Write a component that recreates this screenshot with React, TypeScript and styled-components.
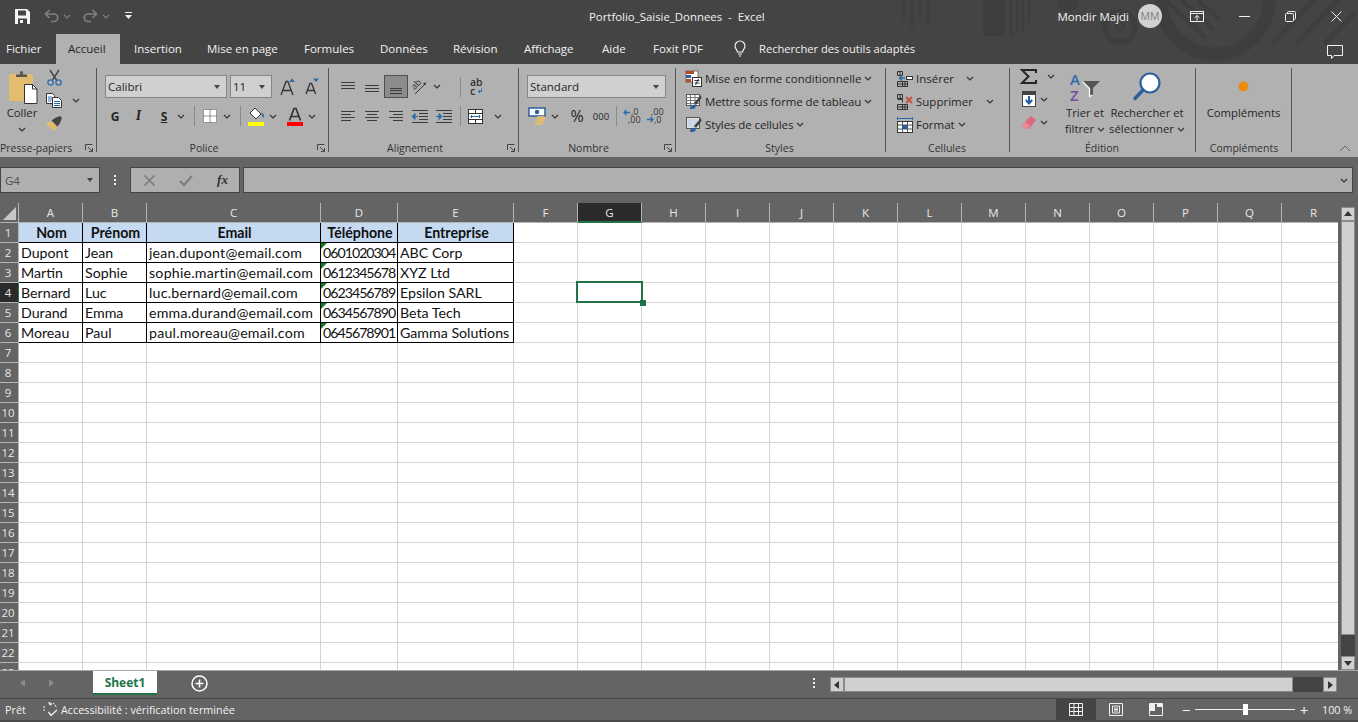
import React from "react";
import styled, { createGlobalStyle } from "styled-components";

const UI = `"Open Sans", "Noto Sans", "Liberation Sans", sans-serif`;
const CELL = `Lato, "Open Sans", "Liberation Sans", sans-serif`;
const GREEN = "#217346";

const Global = createGlobalStyle`
  html, body { margin: 0; padding: 0; width: 100%; height: 100%; overflow: hidden; background: #646464; }
  * { box-sizing: border-box; }
  svg { display: block; flex: none; overflow: visible; }
`;

const Page = styled.div`
  width: 1358px;
  height: 722px;
  display: flex;
  flex-direction: column;
  overflow: hidden;
  background: #646464;
  font-family: ${UI};
  font-size: 11.5px;
`;

/* ---------- header ---------- */
const Header = styled.header`
  position: relative;
  height: 64px;
  flex: none;
  background: #444444;
  color: #f2f2f2;
  overflow: hidden;
`;
const Pattern = styled.svg`
  position: absolute;
  top: 0;
  left: 860px;
  overflow: hidden;
`;
const TitleRow = styled.div`
  position: relative;
  height: 32px;
  display: grid;
  grid-template-columns: 589px auto 1fr;
  align-items: center;
`;
const Qat = styled.div`
  display: flex;
  align-items: center;
  padding-left: 15px;
`;
const TitleText = styled.div`
  font-size: 11.4px;
  white-space: pre;
`;
const WinControls = styled.div`
  display: flex;
  align-items: center;
  justify-content: flex-end;
`;
const UserName = styled.span`
  font-size: 11.5px;
  margin-right: 9px;
`;
const Avatar = styled.div`
  width: 24px;
  height: 24px;
  border-radius: 50%;
  background: #d2d2d2;
  color: #7d7d7d;
  font-size: 10.5px;
  display: flex;
  align-items: center;
  justify-content: center;
  margin-right: 28px;
`;
const Slot = styled.div<{ $w: number; $ml?: number; $h?: number }>`
  width: ${(p) => p.$w}px;
  margin-left: ${(p) => p.$ml ?? 0}px;
  height: ${(p) => (p.$h ? `${p.$h}px` : "auto")};
  flex: none;
  display: flex;
  align-items: center;
  justify-content: center;
`;
const TabRow = styled.nav`
  position: relative;
  height: 32px;
  display: flex;
  align-items: flex-end;
`;
const Tab = styled.div<{ $w: number; $active?: boolean; $pl?: number }>`
  width: ${(p) => p.$w}px;
  height: 30px;
  padding-left: ${(p) => p.$pl ?? 12}px;
  padding-bottom: 1px;
  display: flex;
  align-items: center;
  white-space: nowrap;
  font-size: 11.5px;
  background: ${(p) => (p.$active ? "#b1b1b1" : "transparent")};
  color: ${(p) => (p.$active ? "#262626" : "#f2f2f2")};
`;
const SearchHint = styled.div`
  display: flex;
  align-items: center;
  gap: 12px;
  height: 30px;
  padding-left: 1px;
  padding-bottom: 1px;
  font-size: 11.15px;
  flex: 1;
`;
const CommentBtn = styled.div`
  margin: 0 14px 4px 0;
`;

/* ---------- ribbon ---------- */
const Ribbon = styled.section`
  position: relative;
  height: 93px;
  flex: none;
  background: #b1b1b1;
  color: #262626;
  display: flex;
`;
const Group = styled.div<{ $w: number }>`
  width: ${(p) => p.$w}px;
  flex: none;
  position: relative;
  display: flex;
  flex-direction: column;
  &::after {
    content: "";
    position: absolute;
    right: 0;
    top: 4px;
    bottom: 5px;
    width: 1px;
    background: #555;
  }
`;
const GroupBody = styled.div<{ $pl?: number; $pt?: number }>`
  flex: 1;
  min-height: 0;
  display: flex;
  padding-left: ${(p) => p.$pl ?? 0}px;
  padding-top: ${(p) => p.$pt ?? 0}px;
`;
const Stack = styled.div<{ $gap?: number; $w?: number }>`
  display: flex;
  flex-direction: column;
  flex: none;
  gap: ${(p) => p.$gap ?? 0}px;
  ${(p) => (p.$w ? `width: ${p.$w}px;` : "")}
`;
const ToolRow = styled.div<{ $h?: number }>`
  display: flex;
  align-items: center;
  flex: none;
  height: ${(p) => p.$h ?? 20}px;
`;
const GroupFoot = styled.div`
  height: 16px;
  flex: none;
  margin-bottom: 1px;
  display: flex;
  align-items: center;
  font-size: 10.5px;
  color: #333;
`;
const GroupLabel = styled.div<{ $left?: boolean; $pr?: number }>`
  flex: 1;
  text-align: ${(p) => (p.$left ? "left" : "center")};
  padding-right: ${(p) => p.$pr ?? 0}px;
  white-space: nowrap;
`;
const Launcher = styled.div`
  width: 18px;
  display: flex;
  justify-content: flex-start;
  padding-left: 6px;
`;
const Combo = styled.div<{ $w: number; $ml?: number }>`
  width: ${(p) => p.$w}px;
  margin-left: ${(p) => p.$ml ?? 0}px;
  height: 23px;
  background: #d0d0d0;
  border: 1px solid #868686;
  font-size: 11.5px;
  display: flex;
  align-items: center;
  justify-content: space-between;
  padding: 0 6px 0 2px;
  flex: none;
`;
const Caret = styled.div<{ $c?: string }>`
  width: 0;
  height: 0;
  border-left: 3.5px solid transparent;
  border-right: 3.5px solid transparent;
  border-top: 4px solid ${(p) => p.$c ?? "#444"};
`;
const SelectedTool = styled(Slot)`
  height: 23px;
  background: #8c8c8c;
  border: 1px solid #4f4f4f;
`;
const VSep = styled.div`
  width: 1px;
  height: 20px;
  background: #8a8a8a;
`;
const LinkRow = styled.div<{ $track?: number }>`
  height: 23px;
  flex: none;
  display: flex;
  align-items: center;
  gap: 3px;
  font-size: 11.5px;
  white-space: nowrap;
  letter-spacing: ${(p) => p.$track ?? 0}px;
`;
const Caption = styled.div`
  font-size: 11.3px;
  line-height: 16px;
  height: 16px;
  flex: none;
  text-align: center;
  white-space: nowrap;
  display: flex;
  align-items: center;
  justify-content: center;
  gap: 3px;
`;
const BigTool = styled.div<{ $w: number; $ml?: number }>`
  width: ${(p) => p.$w}px;
  margin-left: ${(p) => p.$ml ?? 0}px;
  flex: none;
  display: flex;
  flex-direction: column;
  align-items: center;
`;
const BigIcon = styled.div`
  height: 37px;
  flex: none;
  display: flex;
  align-items: center;
  justify-content: center;
`;
const BoldGlyph = styled.span<{ $serif?: boolean; $under?: boolean; $size?: number }>`
  font-family: ${(p) => (p.$serif ? `"Liberation Serif", serif` : UI)};
  font-weight: 700;
  font-style: ${(p) => (p.$serif ? "italic" : "normal")};
  text-decoration: ${(p) => (p.$under ? "underline" : "none")};
  font-size: ${(p) => p.$size ?? 12}px;
  color: #262626;
`;
const PlainGlyph = styled.span<{ $size?: number }>`
  font-size: ${(p) => p.$size ?? 11}px;
  color: #262626;
`;
const RibbonCollapse = styled.div`
  position: absolute;
  right: 7px;
  bottom: 5px;
`;

/* ---------- formula bar ---------- */
const FormulaBar = styled.div`
  height: 46px;
  flex: none;
  padding: 10px 5px 10px 0;
  display: flex;
  align-items: stretch;
  background: #646464;
`;
const FieldBox = styled.div<{ $w?: number; $ml?: number }>`
  ${(p) => (p.$w ? `width: ${p.$w}px; flex: none;` : "flex: 1;")}
  margin-left: ${(p) => p.$ml ?? 0}px;
  background: #afafaf;
  border: 1px solid #454545;
  display: flex;
  align-items: center;
  justify-content: space-between;
`;
const NameText = styled.span`
  padding-left: 4px;
  color: #505050;
  font-size: 11.5px;
`;
const Dots = styled.div`
  width: 30px;
  flex: none;
  display: flex;
  flex-direction: column;
  align-items: center;
  justify-content: center;
  gap: 2px;
  span {
    width: 2px;
    height: 2px;
    background: #efefef;
  }
`;
const FnSlot = styled(Slot)`
  height: 100%;
`;

/* ---------- sheet ---------- */
const SheetArea = styled.div`
  height: 467px;
  flex: none;
  display: flex;
`;
const Viewport = styled.div`
  width: 1338px;
  height: 467px;
  overflow: hidden;
  background: #fff;
`;
const SheetGrid = styled.div`
  display: grid;
  grid-template-columns: 19px 64px 64px 174px 77px 116px repeat(13, 64px);
  grid-auto-rows: 20px;
  grid-template-rows: 20px;
`;
const Corner = styled.div`
  background: #646464;
  border-right: 1px solid #b4b4b4;
  border-bottom: 1px solid #b4b4b4;
  display: flex;
  align-items: flex-end;
  justify-content: flex-end;
  padding: 0 2px 2px 0;
`;
const ColHead = styled.div<{ $sel?: boolean }>`
  background: ${(p) => (p.$sel ? "#2a2a2a" : "#646464")};
  color: #e8e8e8;
  font-size: 11.5px;
  text-align: center;
  line-height: 19px;
  border-right: 1px solid #b4b4b4;
  border-bottom: ${(p) => (p.$sel ? `2px solid ${GREEN}` : "1px solid #b4b4b4")};
`;
const RowHead = styled.div<{ $sel?: boolean }>`
  background: ${(p) => (p.$sel ? "#2a2a2a" : "#646464")};
  color: #e8e8e8;
  font-size: 11.5px;
  text-align: center;
  line-height: 19px;
  padding-right: 2px;
  border-bottom: 1px solid #b4b4b4;
  border-right: ${(p) => (p.$sel ? `1px solid ${GREEN}` : "1px solid #b4b4b4")};
`;
const Cell = styled.div<{ $table?: boolean; $head?: boolean; $track?: number }>`
  position: relative;
  padding-left: 2px;
  font-family: ${CELL};
  font-size: 14.2px;
  line-height: 20px;
  color: #111;
  white-space: nowrap;
  background: ${(p) => (p.$head ? "#c5d9f1" : "#fff")};
  font-weight: ${(p) => (p.$head ? 700 : 400)};
  text-align: ${(p) => (p.$head ? "center" : "left")};
  letter-spacing: ${(p) => p.$track ?? 0}px;
  border-right: 1px solid ${(p) => (p.$table ? "#000" : "#d4d4d4")};
  border-bottom: 1px solid ${(p) => (p.$table ? "#000" : "#d4d4d4")};
`;
const ErrorFlag = styled.span`
  position: absolute;
  top: 0;
  left: 0;
  width: 0;
  height: 0;
  border-top: 6px solid #137a2c;
  border-right: 6px solid transparent;
`;
const Selection = styled.span`
  position: absolute;
  z-index: 2;
  top: -2px;
  left: -2px;
  width: 67px;
  height: 22px;
  border: 2px solid ${GREEN};
  &::after {
    content: "";
    position: absolute;
    right: -5px;
    bottom: -5px;
    width: 6px;
    height: 6px;
    background: ${GREEN};
  }
`;
const VScroll = styled.div`
  width: 20px;
  padding: 4px 3px 0 3px;
  display: flex;
  flex-direction: column;
  align-items: stretch;
`;
const ScrollBtn = styled.div`
  height: 14px;
  flex: none;
  background: #d0d0d0;
  border: 1px solid #8a8a8a;
  display: flex;
  align-items: center;
  justify-content: center;
`;
const VThumb = styled.div`
  flex: 1;
  background: #d0d0d0;
  border: 1px solid #8a8a8a;
`;
const VTrack = styled.div`
  height: 21px;
  flex: none;
  background: #444;
`;

/* ---------- sheet tabs ---------- */
const TabsBar = styled.div`
  height: 28px;
  flex: none;
  display: flex;
  align-items: flex-start;
  border-top: 1px solid #a8a8a8;
  background: #646464;
`;
const SheetTab = styled.div`
  width: 64px;
  height: 24px;
  flex: none;
  background: #fff;
  color: ${GREEN};
  font-weight: 700;
  font-size: 12px;
  display: flex;
  align-items: center;
  justify-content: center;
  border-bottom: 2px solid ${GREEN};
  margin-left: 38px;
`;
const HScroll = styled.div`
  margin: 6px 0 0 14px;
  width: 507px;
  height: 15px;
  flex: none;
  display: flex;
`;
const HBtn = styled.div`
  width: 14px;
  flex: none;
  background: #d0d0d0;
  border: 1px solid #8a8a8a;
  display: flex;
  align-items: center;
  justify-content: center;
`;
const HThumb = styled.div`
  flex: 1;
  background: #d0d0d0;
  border: 1px solid #8a8a8a;
`;
const HTrack = styled.div`
  width: 30px;
  flex: none;
  background: #444;
`;

/* ---------- status ---------- */
const StatusBar = styled.footer`
  flex: 1;
  display: flex;
  align-items: stretch;
  background: #646464;
  border-top: 1px solid #484848;
  border-bottom: 2px solid #4a4a4a;
  color: #f2f2f2;
  font-size: 10.8px;
`;
const StatusText = styled.div<{ $w?: number; $pl?: number }>`
  display: flex;
  align-items: center;
  white-space: nowrap;
  flex: none;
  ${(p) => (p.$w ? `width: ${p.$w}px;` : "")}
  padding-left: ${(p) => p.$pl ?? 0}px;
`;
const A11yWrap = styled.div`
  display: flex;
  align-items: center;
`;
const StatusSpring = styled.div`
  flex: 1;
`;
const ViewBtn = styled.div<{ $on?: boolean }>`
  width: 40px;
  flex: none;
  display: flex;
  align-items: center;
  justify-content: center;
  background: ${(p) => (p.$on ? "#444" : "transparent")};
`;
const ZoomTrack = styled.div`
  position: relative;
  width: 100px;
  height: 1px;
  flex: none;
  background: #f0f0f0;
  align-self: center;
  margin: 0 4px;
`;
const ZoomThumb = styled.span`
  position: absolute;
  left: 48px;
  top: -5px;
  width: 5px;
  height: 11px;
  background: #fff;
`;
const ZoomSign = styled.div<{ $ml?: number }>`
  width: 10px;
  flex: none;
  margin-left: ${(p) => p.$ml ?? 0}px;
  display: flex;
  align-items: center;
  justify-content: center;
  font-size: 15px;
  color: #f0f0f0;
`;

/* ---------- icons ---------- */
const Chevron = ({ c = "#333" }: { c?: string }) => (
  <svg width="8" height="5" viewBox="0 0 8 5"><path d="M1 1l3 3 3-3" fill="none" stroke={c} strokeWidth="1.2" /></svg>
);
const SaveIcon = () => (
  <svg width="15" height="15" viewBox="0 0 15 15">
    <path d="M0 0h12l3 3v12H0z" fill="#f4f4f4" />
    <rect x="3" y="1.5" width="8" height="5" fill="#444" />
    <rect x="3" y="9.5" width="9" height="5.5" fill="#444" />
    <rect x="5" y="11" width="3" height="3" fill="#f4f4f4" />
  </svg>
);
const UndoIcon = ({ flip }: { flip?: boolean }) => (
  <svg width="15" height="14" viewBox="0 0 15 14" style={flip ? { transform: "scaleX(-1)" } : undefined}>
    <path d="M5.5 1L1.5 5l4 4M1.5 5H10a3.6 3.6 0 010 7.5H7" fill="none" stroke="#808080" strokeWidth="1.7" />
  </svg>
);
const QatMore = () => (
  <svg width="7" height="8" viewBox="0 0 7 8">
    <path d="M0 .5h7" stroke="#eee" /><path d="M0 3h7L3.5 7z" fill="#eee" />
  </svg>
);
const RibbonOptsIcon = () => (
  <svg width="14" height="11" viewBox="0 0 14 11" fill="none" stroke="#f0f0f0">
    <rect x=".5" y=".5" width="13" height="10" /><path d="M.5 2.5h13M7 9.5V4.5M4.5 6.8L7 4.5l2.5 2.3" />
  </svg>
);
const MinIcon = () => <svg width="11" height="1" viewBox="0 0 11 1"><path d="M0 .5h11" stroke="#f0f0f0" /></svg>;
const RestoreIcon = () => (
  <svg width="11" height="11" viewBox="0 0 11 11" fill="none" stroke="#f0f0f0">
    <rect x=".5" y="2.5" width="8" height="8" rx="1" /><path d="M2.5 2.5v-1a1 1 0 011-1h6a1 1 0 011 1v6a1 1 0 01-1 1h-1" />
  </svg>
);
const CloseIcon = () => (
  <svg width="11" height="11" viewBox="0 0 11 11"><path d="M.5.5l10 10M10.5.5l-10 10" stroke="#f0f0f0" fill="none" /></svg>
);
const CommentIcon = () => (
  <svg width="17" height="15" viewBox="0 0 17 15" fill="none" stroke="#f2f2f2">
    <path d="M.5.5h15v10H7l-2.5 3v-3h-4z" />
  </svg>
);
const BulbIcon = () => (
  <svg width="14" height="17" viewBox="0 0 14 17" fill="none" stroke="#f2f2f2" strokeWidth="1.2">
    <path d="M4.5 12c0-2-2.5-3-2.5-6a5 5 0 0110 0c0 3-2.5 4-2.5 6z" /><path d="M5 14h4M6 16h2" />
  </svg>
);
const PasteIcon = () => (
  <svg width="29" height="33" viewBox="0 0 29 33">
    <rect x="0" y="3" width="24" height="27" rx="2" fill="#e3bc6e" />
    <path d="M7 6V3.5h4V1.5a1.5 1.5 0 013 0v2h4V6z" fill="#555" />
    <path d="M15.5 13.5h8l4.5 4.5v14.5H15.5z" fill="#fff" stroke="#333" />
    <path d="M23.5 13.5v4.5h4.5" fill="none" stroke="#333" />
  </svg>
);
const CutIcon = () => (
  <svg width="15" height="16" viewBox="0 0 15 16" fill="none">
    <path d="M3 0l6.5 10M12 0L5.5 10" stroke="#444" strokeWidth="1.4" />
    <circle cx="3.5" cy="12.5" r="2.6" stroke="#2b6ca8" strokeWidth="1.3" />
    <circle cx="11.5" cy="12.5" r="2.6" stroke="#2b6ca8" strokeWidth="1.3" />
  </svg>
);
const CopyIcon = () => (
  <svg width="16" height="15" viewBox="0 0 16 15">
    <path d="M.5.5h6l2 2v8H.5z" fill="#fff" stroke="#333" />
    <path d="M6.5 4.5h6l3 3v7h-9z" fill="#fff" stroke="#333" />
    <path d="M2 4h4M2 6h4M2 8h3M8 8.5h6M8 10.5h6M8 12.5h6" stroke="#2b6ca8" />
  </svg>
);
const BrushIcon = () => (
  <svg width="16" height="15" viewBox="0 0 16 15">
    <path d="M0 8l5-3 6 6-3 4z" fill="#e3bc6e" />
    <path d="M5.5 4.5L9 2l5-2 2 2-2 5-2.5 3.5z" fill="#444" />
  </svg>
);
const LaunchIcon = () => (
  <svg width="8" height="8" viewBox="0 0 8 8" fill="none" stroke="#444">
    <path d="M.5 6V.5H7.5M3 3l4 4M7.5 4v3.5H4" />
  </svg>
);
const GrowA = ({ down }: { down?: boolean }) => (
  <svg width="16" height="18" viewBox="0 0 16 18">
    <path d={down ? "M2 16L6 5.5h1.6L11.6 16M3.4 12.5h6.8" : "M1 17L6 3.5h1.8L13 17M2.6 12.5h8.6"} fill="none" stroke="#333" strokeWidth="1.3" />
    <path d={down ? "M9 0.5h6L12 4z" : "M9 4h6L12 .5z"} fill="#2b6ca8" />
  </svg>
);
const BordersIcon = () => (
  <svg width="14" height="14" viewBox="0 0 14 14">
    <rect width="14" height="14" fill="#fff" />
    <path d="M.5.5h13v13H.5zM7 .5v13M.5 7h13" fill="none" stroke="#333" strokeDasharray="1 1" />
  </svg>
);
const FillIcon = () => (
  <svg width="17" height="19" viewBox="0 0 17 19">
    <path d="M7 1l6 6-5 5-6-6z" fill="#fff" stroke="#333" />
    <path d="M13 6c2 0 3 1 3 3l-.8 2-1.2-2z" fill="#2b6ca8" />
    <rect x="0" y="15" width="16" height="4" fill="#ffff00" />
  </svg>
);
const FontColorIcon = () => (
  <svg width="16" height="19" viewBox="0 0 16 19">
    <path d="M2.5 13.5L7 1.5h2l4.5 12M4.5 9.5h7" fill="none" stroke="#333" strokeWidth="1.7" />
    <rect x="0" y="15" width="16" height="4" fill="#ff0000" />
  </svg>
);
const LinesIcon = ({ a = [] as number[][] }) => (
  <svg width="16" height="14" viewBox="0 0 16 14">
    {a.map((l, i) => (
      <path key={i} d={`M${l[0]} ${l[2]}.5H${l[1]}`} stroke="#3b3b3b" />
    ))}
  </svg>
);
const OrientIcon = () => (
  <svg width="16" height="16" viewBox="0 0 16 16" fill="none">
    <path d="M3 15L14 4" stroke="#333" /><path d="M14 3.5l-3 .8 2.2 2.2z" fill="#333" />
    <text x="0" y="9" fontFamily="Open Sans, sans-serif" fontSize="9" fill="#333" transform="rotate(-45 4 7)">ab</text>
  </svg>
);
const WrapIcon = () => (
  <svg width="13" height="17" viewBox="0 0 13 17">
    <text x="0" y="8" fontFamily="Open Sans, sans-serif" fontSize="10.5" fontWeight="600" fill="#333">ab</text>
    <text x="0" y="16.5" fontFamily="Open Sans, sans-serif" fontSize="10.5" fontWeight="600" fill="#333">c</text>
    <path d="M11.5 10.5v3h-3M10 12l-1.5 1.5L10 15" fill="none" stroke="#2b6ca8" />
  </svg>
);
const IndentIcon = ({ inc }: { inc?: boolean }) => (
  <svg width="16" height="13" viewBox="0 0 16 13">
    <path d="M0 .5h16M7 3.5h9M7 6.5h9M7 9.5h9M0 12.5h16" stroke="#3b3b3b" />
    <path d={inc ? "M0 6.5h3.5M3 3.5l3 3-3 3z" : "M6 6.5H2.5M3 3.5l-3 3 3 3z"} fill="#2b6ca8" stroke="#2b6ca8" />
  </svg>
);
const MergeIcon = () => (
  <svg width="15" height="15" viewBox="0 0 15 15">
    <rect x=".5" y=".5" width="14" height="14" fill="#fff" stroke="#333" />
    <path d="M.5 4.5h14M.5 10.5h14M7.5.5v4M7.5 10.5v4" stroke="#333" fill="none" />
    <path d="M2.5 7.5h10M3.5 6v3M11.5 6v3" stroke="#2b6ca8" fill="none" />
  </svg>
);
const MoneyIcon = () => (
  <svg width="18" height="17" viewBox="0 0 18 17">
    <rect x="0" y="0" width="16" height="8" fill="#fff" stroke="#2b5f9e" strokeWidth="1.5" />
    <circle cx="8" cy="4" r="2.2" fill="#2b5f9e" />
    <ellipse cx="12" cy="9.5" rx="4.5" ry="1.5" fill="#e3bc6e" />
    <ellipse cx="12" cy="12.3" rx="4.5" ry="1.5" fill="#e3bc6e" />
    <ellipse cx="10" cy="15.2" rx="4.5" ry="1.5" fill="#e3bc6e" />
  </svg>
);
const DecimalIcon = ({ inc }: { inc?: boolean }) => (
  <svg width="16" height="14" viewBox="0 0 16 14">
    <text x={inc ? 4 : 7} y="6" fontFamily="Open Sans, sans-serif" fontSize="9" fill="#333">{inc ? ",00" : ",0"}</text>
    <text x={inc ? 7 : 4} y="14" fontFamily="Open Sans, sans-serif" fontSize="9" fill="#333">{inc ? ",0" : ",00"}</text>
    <path d={inc ? "M0 10.5h6M3.5 8L6 10.5 3.5 13" : "M6 3.5H0M2.5 1L0 3.5 2.5 6"} fill="none" stroke="#2b6ca8" strokeWidth="1.3" />
  </svg>
);
const CondIcon = () => (
  <svg width="16" height="16" viewBox="0 0 16 16">
    <rect x="0" y="0" width="12" height="11" fill="#fff" stroke="#555" strokeWidth=".8" />
    <rect x="0" y="0" width="8" height="3" fill="#b84a2c" />
    <rect x="0" y="4" width="5" height="3" fill="#2b5f9e" />
    <rect x="0" y="8" width="5" height="3" fill="#b84a2c" />
    <rect x="6.5" y="6.5" width="9" height="9" fill="#fff" stroke="#333" />
    <path d="M8.5 9.5h5M8.5 12h5M12.5 8l-3 6" stroke="#333" fill="none" />
  </svg>
);
const TableIcon = ({ plain }: { plain?: boolean }) => (
  <svg width="16" height="16" viewBox="0 0 16 16">
    <rect x=".5" y=".5" width="13" height="11" fill={plain ? "#e6e6e6" : "#fff"} stroke="#555" />
    {plain ? <rect x="2" y="2" width="10" height="8" fill="#c9d6e6" /> : <path d="M.5 3.5h13M.5 6.5h13M.5 9.5h13M4.5.5v11M9 .5v11" stroke="#777" />}
    <path d="M15 1L8 9l2 2 5.5-7z" fill="#444" />
    <path d="M4 15c0-3 2-5 5-4 1 .6 1 2 0 3-1 1-3 1-5 1z" fill="#2b5f9e" />
  </svg>
);
const InsertIcon = () => (
  <svg width="16" height="16" viewBox="0 0 16 16" fill="none" stroke="#333">
    <path d="M.5.5h5v4h-5zM.5 10.5h5v5h-5zM5.5 10.5h5v5h-5zM3 .5v4M8 10.5v5M.5 13h10" />
    <rect x="9.5" y="5.5" width="6" height="3" fill="#fff" />
    <path d="M8 7H2.5M5 4.5L2.5 7 5 9.5" stroke="#2b6ca8" strokeWidth="1.4" />
  </svg>
);
const DeleteIcon = () => (
  <svg width="16" height="16" viewBox="0 0 16 16" fill="none" stroke="#333">
    <path d="M.5.5h5v4h-5zM.5 10.5h5v5h-5zM5.5 10.5h5v5h-5zM3 .5v4M8 10.5v5M.5 13h10M.5 5.5h5v3" />
    <path d="M9 3l6 6M15 3l-6 6" stroke="#c8513a" strokeWidth="1.8" />
  </svg>
);
const FormatIcon = () => (
  <svg width="16" height="16" viewBox="0 0 16 16" fill="none">
    <path d="M.5 1.5h15M.5 0v3M15.5 0v3" stroke="#2b6ca8" />
    <rect x=".5" y="4.5" width="15" height="11" fill="#fff" stroke="#333" />
    <path d="M.5 8h15M.5 12h15M5.5 4.5v11M10.5 4.5v11" stroke="#555" />
    <rect x="5.5" y="8" width="5" height="4" fill="#2b5f9e" />
  </svg>
);
const SigmaIcon = () => (
  <svg width="15" height="15" viewBox="0 0 15 15">
    <path d="M15 4V1H1l6.5 6.5L1 14h14v-3" fill="none" stroke="#262626" strokeWidth="2" />
  </svg>
);
const FillDownIcon = () => (
  <svg width="14" height="16" viewBox="0 0 14 16">
    <rect x="0" y="0" width="14" height="16" fill="#444" />
    <rect x="1" y="4" width="12" height="11" fill="#fff" />
    <path d="M7 5v7M3.8 9L7 12.5 10.2 9" fill="none" stroke="#1f5e9e" strokeWidth="2" />
  </svg>
);
const EraserIcon = () => (
  <svg width="14" height="13" viewBox="0 0 14 13">
    <path d="M9 0l5 4-7 9H3L0 9z" fill="#dc6a7c" />
    <path d="M0 9l3-3 5 4-2 3H3z" fill="#e98a98" />
  </svg>
);
const SortIcon = () => (
  <svg width="30" height="30" viewBox="0 0 30 30">
    <text x="0" y="13" fontFamily="Open Sans, sans-serif" fontSize="15" fontWeight="600" fill="#2b6ca8">A</text>
    <text x="0" y="29" fontFamily="Open Sans, sans-serif" fontSize="15" fontWeight="600" fill="#7b4ba8">Z</text>
    <path d="M12 9h18l-7 7v7l-4 2v-9z" fill="#555" />
    <path d="M12.5 9.5l7 7v8l3-1.5" fill="none" stroke="#fff" strokeWidth="1.3" />
  </svg>
);
const FindIcon = () => (
  <svg width="28" height="29" viewBox="0 0 28 29">
    <circle cx="17" cy="11" r="9.5" fill="#fff" stroke="#2b5f9e" strokeWidth="2.2" />
    <path d="M10 18L2 26.5" stroke="#2b5f9e" strokeWidth="3.4" strokeLinecap="round" />
  </svg>
);
const AddinDot = () => (
  <svg width="11" height="11" viewBox="0 0 11 11"><circle cx="5.5" cy="5.5" r="5" fill="#ec8c0c" /></svg>
);
const CornerTri = () => (
  <svg width="13" height="13" viewBox="0 0 13 13"><path d="M13 0v13H0z" fill="#c8c8c8" /></svg>
);
const XIcon = () => <svg width="11" height="11" viewBox="0 0 11 11"><path d="M.5.5l10 10M10.5.5l-10 10" stroke="#7b7b7b" strokeWidth="1.6" /></svg>;
const CheckIcon = () => <svg width="14" height="11" viewBox="0 0 14 11"><path d="M1 6l4 4 8-9" stroke="#7b7b7b" strokeWidth="2" fill="none" /></svg>;
const FxGlyph = styled.span`
  font-family: "Liberation Serif", serif;
  font-style: italic;
  font-weight: 700;
  font-size: 13px;
  color: #333;
`;
const Tri = ({ dir, c = "#333" }: { dir: "u" | "d" | "l" | "r"; c?: string }) => {
  const d = { u: "M0 6L4 1l4 5z", d: "M0 2l4 5 4-5z", l: "M6 0v8L1 4z", r: "M2 0v8l5-4z" }[dir];
  return <svg width="8" height="8" viewBox="0 0 8 8"><path d={d} fill={c} /></svg>;
};
const PlusCircle = () => (
  <svg width="17" height="17" viewBox="0 0 17 17" fill="none" stroke="#fff">
    <circle cx="8.5" cy="8.5" r="7.5" strokeWidth="1.5" /><path d="M8.5 4.5v8M4.5 8.5h8" strokeWidth="1.6" />
  </svg>
);
const A11yIcon = () => (
  <svg width="16" height="15" viewBox="0 0 16 15" fill="none" stroke="#f0f0f0">
    <path d="M1 9V6a5 5 0 011-3M5 1l1.5-.5M10 1l2 1.5 1.5 3.5" strokeDasharray="2 1" />
    <circle cx="7.5" cy="2" r="1" fill="#f0f0f0" />
    <path d="M5.5 10l2.5 3.5 6-5.5" strokeWidth="1.3" />
  </svg>
);
const GridView = () => (
  <svg width="14" height="13" viewBox="0 0 14 13" fill="none" stroke="#f0f0f0">
    <path d="M.5.5h13v12H.5zM.5 4.5h13M.5 8.5h13M5 .5v12M9.5.5v12" />
  </svg>
);
const PageView = () => (
  <svg width="14" height="13" viewBox="0 0 14 13" fill="none" stroke="#f0f0f0">
    <path d="M.5.5h13v12H.5zM3.5 3h7v7h-7zM5 5h4M5 6.5h4M5 8h4" />
  </svg>
);
const BreakView = () => (
  <svg width="14" height="13" viewBox="0 0 14 13">
    <path d="M.5.5h13v12H.5z" fill="none" stroke="#f0f0f0" />
    <path d="M1 0h5v8H1zM8 0h5v4H8z" fill="#f0f0f0" />
  </svg>
);

/* ---------- data ---------- */
const COLS = "ABCDEFGHIJKLMNOPQR".split("");
const HEAD = ["Nom", "Prénom", "Email", "Téléphone", "Entreprise"];
const DATA = [
  ["Dupont", "Jean", "jean.dupont@email.com", "0601020304", "ABC Corp"],
  ["Martin", "Sophie", "sophie.martin@email.com", "0612345678", "XYZ Ltd"],
  ["Bernard", "Luc", "luc.bernard@email.com", "0623456789", "Epsilon SARL"],
  ["Durand", "Emma", "emma.durand@email.com", "0634567890", "Beta Tech"],
  ["Moreau", "Paul", "paul.moreau@email.com", "0645678901", "Gamma Solutions"],
];
const TRACK = [0, 0, 0.22, -1, 0];
const TABS: [string, number, boolean?, number?][] = [
  ["Fichier", 56, false, 6],
  ["Accueil", 64, true],
  ["Insertion", 75, false, 14],
  ["Mise en page", 97],
  ["Formules", 76],
  ["Données", 73],
  ["Révision", 71],
  ["Affichage", 78],
  ["Aide", 51],
  ["Foxit PDF", 91],
];

const Grid = () => {
  const rows = [];
  for (let r = 1; r <= 23; r++) {
    rows.push(<RowHead key={`h${r}`} $sel={r === 4}>{r}</RowHead>);
    COLS.forEach((c, i) => {
      const inTable = r <= 6 && i < 5;
      const text = r === 1 ? HEAD[i] : DATA[r - 2]?.[i];
      rows.push(
        <Cell key={`${c}${r}`} $table={inTable} $head={r === 1 && i < 5} $track={inTable && r > 1 ? TRACK[i] : 0}>
          {inTable ? text : null}
          {inTable && r > 1 && i === 3 ? <ErrorFlag /> : null}
          {c === "G" && r === 4 ? <Selection /> : null}
        </Cell>
      );
    });
  }
  return (
    <SheetGrid>
      <Corner><CornerTri /></Corner>
      {COLS.map((c) => <ColHead key={c} $sel={c === "G"}>{c}</ColHead>)}
      {rows}
    </SheetGrid>
  );
};

const L = (a: number[][]) => <LinesIcon a={a} />;

export default function App() {
  return (
    <Page>
      <Global />
      <Header>
        <Pattern width="498" height="64" viewBox="0 0 498 64" fill="none" stroke="#3e3e3e">
          <path d="M44 0v20M52 0v28M60 0v14M68 0v26" strokeWidth="3" />
          <path d="M123 0v36h22V0z" fill="#3e3e3e" strokeWidth="0" />
          <path d="M151 0v36M157 0v34M163 0v30M169 0v22" strokeWidth="2.5" />
          <circle cx="208" cy="0" r="11" fill="#3e3e3e" stroke="none" />
          <circle cx="260" cy="27" r="15" strokeWidth="6" />
          <circle cx="260" cy="27" r="4" strokeWidth="2" />
          <circle cx="355" cy="0" r="54" strokeWidth="13" />
          <path d="M306 0l40 38M322 0l32 30M338 0l22 20" strokeWidth="4" />
          <path d="M454 0L412 44M478 0L436 44M496 12L464 44" strokeWidth="5" />
        </Pattern>
        <TitleRow>
          <Qat>
            <SaveIcon />
            <Slot $w={15} $ml={14}><UndoIcon /></Slot>
            <Slot $w={12} $ml={2}><Chevron c="#808080" /></Slot>
            <Slot $w={15} $ml={10}><UndoIcon flip /></Slot>
            <Slot $w={12} $ml={2}><Chevron c="#808080" /></Slot>
            <Slot $w={8} $ml={12}><QatMore /></Slot>
          </Qat>
          <TitleText>Portfolio_Saisie_Donnees  -  Excel</TitleText>
          <WinControls>
            <UserName>Mondir Majdi</UserName>
            <Avatar>MM</Avatar>
            <RibbonOptsIcon />
            <Slot $w={11} $ml={35}><MinIcon /></Slot>
            <Slot $w={11} $ml={35}><RestoreIcon /></Slot>
            <Slot $w={11} $ml={35}><CloseIcon /></Slot>
            <Slot $w={16} />
          </WinControls>
        </TitleRow>
        <TabRow>
          {TABS.map(([t, w, on, pl]) => (
            <Tab key={t} $w={w} $active={on} $pl={pl}>{t}</Tab>
          ))}
          <SearchHint>
            <BulbIcon />
            <span>Rechercher des outils adaptés</span>
          </SearchHint>
          <CommentBtn><CommentIcon /></CommentBtn>
        </TabRow>
      </Header>

      <Ribbon>
        <Group $w={97}>
          <GroupBody $pt={6}>
            <BigTool $w={44}>
              <Slot $w={44} $h={35} $ml={3}><PasteIcon /></Slot>
              <Caption>Coller</Caption>
              <Slot $w={44} $h={16}><Chevron /></Slot>
            </BigTool>
            <Stack $gap={8}>
              <Slot $w={20} $h={15}><CutIcon /></Slot>
              <ToolRow $h={15}>
                <Slot $w={20}><CopyIcon /></Slot>
                <Slot $w={8} $ml={8}><Chevron /></Slot>
              </ToolRow>
              <Slot $w={20} $h={15}><BrushIcon /></Slot>
            </Stack>
          </GroupBody>
          <GroupFoot>
            <GroupLabel $left>Presse-papiers</GroupLabel>
            <Launcher><LaunchIcon /></Launcher>
          </GroupFoot>
        </Group>

        <Group $w={232}>
          <GroupBody $pl={8} $pt={11}>
            <Stack $gap={8}>
              <ToolRow $h={23}>
                <Combo $w={122}>Calibri<Caret /></Combo>
                <Combo $w={42} $ml={3}>11<Caret /></Combo>
                <Slot $w={24} $ml={4}><GrowA /></Slot>
                <Slot $w={24}><GrowA down /></Slot>
              </ToolRow>
              <ToolRow>
                <Slot $w={20}><BoldGlyph>G</BoldGlyph></Slot>
                <Slot $w={27}><BoldGlyph $serif $size={14}>I</BoldGlyph></Slot>
                <Slot $w={24}><BoldGlyph $under>S</BoldGlyph></Slot>
                <Slot $w={10}><Chevron /></Slot>
                <Slot $w={16}><VSep /></Slot>
                <Slot $w={16}><BordersIcon /></Slot>
                <Slot $w={18}><Chevron /></Slot>
                <Slot $w={8}><VSep /></Slot>
                <Slot $w={24}><FillIcon /></Slot>
                <Slot $w={10}><Chevron /></Slot>
                <Slot $w={26} $ml={4}><FontColorIcon /></Slot>
                <Slot $w={8}><Chevron /></Slot>
              </ToolRow>
            </Stack>
          </GroupBody>
          <GroupFoot>
            <GroupLabel>Police</GroupLabel>
            <Launcher><LaunchIcon /></Launcher>
          </GroupFoot>
        </Group>

        <Group $w={190}>
          <GroupBody $pl={7} $pt={11}>
            <Stack $gap={8}>
              <ToolRow $h={23}>
                <Slot $w={24}>{L([[1, 15, 2], [1, 15, 5], [1, 15, 8]])}</Slot>
                <Slot $w={24}>{L([[1, 15, 5], [1, 15, 8], [1, 15, 11]])}</Slot>
                <SelectedTool $w={24}>{L([[2, 14, 8], [2, 14, 10], [2, 14, 13]])}</SelectedTool>
                <Slot $w={24}><OrientIcon /></Slot>
                <Slot $w={10}><Chevron /></Slot>
                <Slot $w={10} $ml={13} $h={20}><VSep /></Slot>
                <Slot $w={22}><WrapIcon /></Slot>
              </ToolRow>
              <ToolRow>
                <Slot $w={24}>{L([[1, 15, 2], [1, 11, 5], [1, 15, 8], [1, 11, 11]])}</Slot>
                <Slot $w={24}>{L([[1, 15, 2], [3, 13, 5], [1, 15, 8], [3, 13, 11]])}</Slot>
                <Slot $w={24}>{L([[1, 15, 2], [5, 15, 5], [1, 15, 8], [5, 15, 11]])}</Slot>
                <Slot $w={24}><IndentIcon /></Slot>
                <Slot $w={24}><IndentIcon inc /></Slot>
                <Slot $w={8}><VSep /></Slot>
                <Slot $w={22}><MergeIcon /></Slot>
                <Slot $w={10} $ml={7}><Chevron /></Slot>
              </ToolRow>
            </Stack>
          </GroupBody>
          <GroupFoot>
            <GroupLabel>Alignement</GroupLabel>
            <Launcher><LaunchIcon /></Launcher>
          </GroupFoot>
        </Group>

        <Group $w={157}>
          <GroupBody $pl={8} $pt={11}>
            <Stack $gap={8}>
              <ToolRow $h={23}>
                <Combo $w={139}>Standard<Caret /></Combo>
              </ToolRow>
              <ToolRow>
                <Slot $w={22}><MoneyIcon /></Slot>
                <Slot $w={10} $ml={1}><Chevron /></Slot>
                <Slot $w={34}><PlainGlyph $size={16}>%</PlainGlyph></Slot>
                <Slot $w={14}><PlainGlyph $size={9.5}>000</PlainGlyph></Slot>
                <Slot $w={16}><VSep /></Slot>
                <Slot $w={16}><DecimalIcon /></Slot>
                <Slot $w={16} $ml={7}><DecimalIcon inc /></Slot>
              </ToolRow>
            </Stack>
          </GroupBody>
          <GroupFoot>
            <GroupLabel>Nombre</GroupLabel>
            <Launcher><LaunchIcon /></Launcher>
          </GroupFoot>
        </Group>

        <Group $w={210}>
          <GroupBody $pl={10} $pt={3}>
            <Stack>
              <LinkRow><CondIcon />Mise en forme conditionnelle <Chevron /></LinkRow>
              <LinkRow $track={-0.12}><TableIcon />Mettre sous forme de tableau <Chevron /></LinkRow>
              <LinkRow $track={-0.1}><TableIcon plain />Styles de cellules <Chevron /></LinkRow>
            </Stack>
          </GroupBody>
          <GroupFoot><GroupLabel $pr={3}>Styles</GroupLabel></GroupFoot>
        </Group>

        <Group $w={124}>
          <GroupBody $pl={11} $pt={3}>
            <Stack>
              <LinkRow><InsertIcon />Insérer <Slot $w={8} $ml={9}><Chevron /></Slot></LinkRow>
              <LinkRow><DeleteIcon />Supprimer <Slot $w={8} $ml={10}><Chevron /></Slot></LinkRow>
              <LinkRow><FormatIcon />Format <Chevron /></LinkRow>
            </Stack>
          </GroupBody>
          <GroupFoot><GroupLabel $pr={2}>Cellules</GroupLabel></GroupFoot>
        </Group>

        <Group $w={186}>
          <GroupBody $pl={11} $pt={4}>
            <Stack $w={49} $gap={7}>
              <ToolRow $h={16}>
                <SigmaIcon />
                <Slot $w={8} $ml={11}><Chevron /></Slot>
              </ToolRow>
              <ToolRow $h={16}>
                <Slot $w={16}><FillDownIcon /></Slot>
                <Slot $w={8} $ml={3}><Chevron /></Slot>
              </ToolRow>
              <ToolRow $h={16}>
                <Slot $w={16}><EraserIcon /></Slot>
                <Slot $w={8} $ml={3}><Chevron /></Slot>
              </ToolRow>
            </Stack>
            <BigTool $w={50} $ml={-10}>
              <BigIcon><SortIcon /></BigIcon>
              <Caption>Trier et</Caption>
              <Caption>filtrer <Chevron /></Caption>
            </BigTool>
            <BigTool $w={78} $ml={-2}>
              <BigIcon><FindIcon /></BigIcon>
              <Caption>Rechercher et</Caption>
              <Caption>sélectionner <Chevron /></Caption>
            </BigTool>
          </GroupBody>
          <GroupFoot><GroupLabel $pr={2}>Édition</GroupLabel></GroupFoot>
        </Group>

        <Group $w={96}>
          <GroupBody $pt={4}>
            <BigTool $w={95}>
              <BigIcon><AddinDot /></BigIcon>
              <Caption>Compléments</Caption>
            </BigTool>
          </GroupBody>
          <GroupFoot><GroupLabel>Compléments</GroupLabel></GroupFoot>
        </Group>
        <RibbonCollapse><svg width="12" height="7" viewBox="0 0 12 7"><path d="M1 6l5-5 5 5" fill="none" stroke="#666" /></svg></RibbonCollapse>
      </Ribbon>

      <FormulaBar>
        <FieldBox $w={100}>
          <NameText>G4</NameText>
          <Slot $w={18}><Caret $c="#444" /></Slot>
        </FieldBox>
        <Dots><span /><span /><span /></Dots>
        <FieldBox $w={110}>
          <FnSlot $w={37}><XIcon /></FnSlot>
          <FnSlot $w={36}><CheckIcon /></FnSlot>
          <FnSlot $w={37}><FxGlyph>fx</FxGlyph></FnSlot>
        </FieldBox>
        <FieldBox $ml={3}>
          <span />
          <Slot $w={16}><Chevron c="#333" /></Slot>
        </FieldBox>
      </FormulaBar>

      <SheetArea>
        <Viewport><Grid /></Viewport>
        <VScroll>
          <ScrollBtn><Tri dir="u" /></ScrollBtn>
          <VThumb />
          <VTrack />
          <ScrollBtn><Tri dir="d" /></ScrollBtn>
        </VScroll>
      </SheetArea>

      <TabsBar>
        <Slot $w={8} $h={24} $ml={19}><Tri dir="l" c="#8a8a8a" /></Slot>
        <Slot $w={8} $h={24} $ml={20}><Tri dir="r" c="#8a8a8a" /></Slot>
        <SheetTab>Sheet1</SheetTab>
        <Slot $w={17} $h={24} $ml={34}><PlusCircle /></Slot>
        <Slot $w={4} $h={24} $ml={604}>
          <Dots><span /><span /><span /></Dots>
        </Slot>
        <HScroll>
          <HBtn><Tri dir="l" /></HBtn>
          <HThumb />
          <HTrack />
          <HBtn><Tri dir="r" /></HBtn>
        </HScroll>
      </TabsBar>

      <StatusBar>
        <StatusText $w={43} $pl={5}>Prêt</StatusText>
        <A11yWrap><A11yIcon /></A11yWrap>
        <StatusText $pl={2}>Accessibilité : vérification terminée</StatusText>
        <StatusSpring />
        <ViewBtn $on><GridView /></ViewBtn>
        <ViewBtn><PageView /></ViewBtn>
        <ViewBtn><BreakView /></ViewBtn>
        <ZoomSign $ml={5}>−</ZoomSign>
        <ZoomTrack><ZoomThumb /></ZoomTrack>
        <ZoomSign>+</ZoomSign>
        <StatusText $w={49} $pl={13}>100 %</StatusText>
      </StatusBar>
    </Page>
  );
}
